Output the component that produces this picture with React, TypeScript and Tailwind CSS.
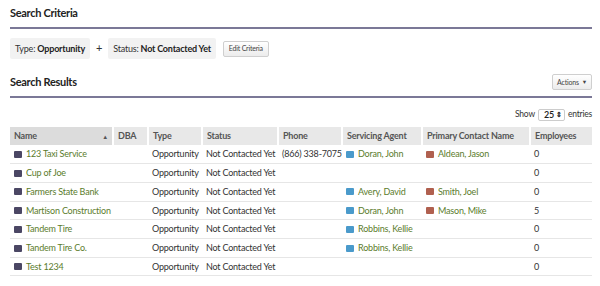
// Search page: criteria chips + results table

const rows = [
  { name: '123 Taxi Service', phone: '(866) 338-7075', agent: 'Doran, John', contact: 'Aldean, Jason', emp: '0' },
  { name: 'Cup of Joe', phone: '', agent: '', contact: '', emp: '0' },
  { name: 'Farmers State Bank', phone: '', agent: 'Avery, David', contact: 'Smith, Joel', emp: '0' },
  { name: 'Martison Construction', phone: '', agent: 'Doran, John', contact: 'Mason, Mike', emp: '5' },
  { name: 'Tandem Tire', phone: '', agent: 'Robbins, Kellie', contact: '', emp: '0' },
  { name: 'Tandem Tire Co.', phone: '', agent: 'Robbins, Kellie', contact: '', emp: '0' },
  { name: 'Test 1234', phone: '', agent: '', contact: '', emp: '0' },
]

const cols = [
  { label: 'Name', w: 103 },
  { label: 'DBA', w: 35 },
  { label: 'Type', w: 54 },
  { label: 'Status', w: 76 },
  { label: 'Phone', w: 64 },
  { label: 'Servicing Agent', w: 80 },
  { label: 'Primary Contact Name', w: 108 },
  { label: 'Employees', w: 62 },
]

function Swatch({ color }: { color: string }) {
  return <span className={`inline-block w-[8px] h-[7px] rounded-[1px] mr-[4px] align-[-0.5px] ${color}`} />
}

function Link({ text, color }: { text: string; color: string }) {
  if (!text) return null
  return (
    <span className="whitespace-nowrap">
      <Swatch color={color} />
      <span className="text-[#5b7c2c]">{text}</span>
    </span>
  )
}

function SectionTitle({ children, right }: { children: React.ReactNode; right?: React.ReactNode }) {
  return (
    <div>
      <div className="flex items-center justify-between h-[22px]">
        <h2 className="text-[11px] font-bold text-[#222] tracking-[-0.3px]">{children}</h2>
        {right}
      </div>
      <div className="h-[2px] bg-[#7b7897] mt-[3px]" />
    </div>
  )
}

export default function App() {
  return (
    <div
      className="w-[600px] h-[286px] bg-white pl-[10px] pr-[8px] pt-[2px] text-[9px] tracking-[-0.2px] text-[#333] overflow-hidden"
      style={{ fontFamily: 'Lato, "Open Sans", sans-serif' }}
    >
      <SectionTitle>Search Criteria</SectionTitle>

      <div className="flex items-center mt-[9px] h-[21px]">
        <div className="h-full flex items-center px-[5px] bg-[#f2f2f2] rounded-[2px]">
          Type:&nbsp;<b className="text-[#222]">Opportunity</b>
        </div>
        <span className="mx-[6px] text-[11px] text-[#333]">+</span>
        <div className="h-full flex items-center px-[5px] bg-[#f2f2f2] rounded-[2px]">
          Status:&nbsp;<b className="text-[#222]">Not Contacted Yet</b>
        </div>
        <button className="ml-[7px] h-[16px] px-[5px] text-[7px] text-[#444] border border-[#cfcfcf] rounded-[2px] bg-gradient-to-b from-white to-[#ececec]">
          Edit Criteria
        </button>
      </div>

      <div className="mt-[12px]">
        <SectionTitle
          right={
            <button className="h-[16px] px-[4px] text-[7px] text-[#444] border border-[#cfcfcf] rounded-[2px] bg-gradient-to-b from-white to-[#ececec] flex items-center gap-[3px]">
              Actions <span className="text-[5.5px]">▼</span>
            </button>
          }
        >
          Search Results
        </SectionTitle>
      </div>

      <div className="flex items-center justify-end mt-[10px] h-[13px] text-[8.5px]">
        Show
        <span className="mx-[3px] h-[12px] w-[27px] border border-[#ccc] rounded-[2px] flex items-center justify-between pl-[5px] pr-[2px] text-[9px] font-semibold text-[#222]">
          25 <span className="text-[7px] leading-none">⇕</span>
        </span>
        entries
      </div>

      <table className="mt-[6px] table-fixed border-collapse w-[582px]">
        <colgroup>
          {cols.map((c) => (
            <col key={c.label} style={{ width: c.w }} />
          ))}
        </colgroup>
        <thead>
          <tr className="h-[18px]">
            {cols.map((c, i) => (
              <th
                key={c.label}
                className={`text-left font-bold text-[#555] px-[4px] border-r-2 border-white last:border-r-0 whitespace-nowrap ${i === 0 ? 'bg-[#dcdcdc]' : 'bg-[#e8e8e8]'}`}
              >
                {i === 0 ? (
                  <span className="flex items-center justify-between">
                    Name <span className="text-[6px] text-[#555]">▲</span>
                  </span>
                ) : (
                  c.label
                )}
              </th>
            ))}
          </tr>
        </thead>
        <tbody>
          {rows.map((r) => (
            <tr key={r.name} className="h-[18.7px] border-b border-[#e6e6e6]">
              <td className="px-[4px] whitespace-nowrap">
                <Link text={r.name} color="bg-[#4b4764]" />
              </td>
              <td className="px-[4px]" />
              <td className="px-[4px]">Opportunity</td>
              <td className="px-[4px] whitespace-nowrap">Not Contacted Yet</td>
              <td className="px-[4px] whitespace-nowrap">{r.phone}</td>
              <td className="px-[4px]">
                <Link text={r.agent} color="bg-[#4a9acb]" />
              </td>
              <td className="px-[4px]">
                <Link text={r.contact} color="bg-[#b0604f]" />
              </td>
              <td className="px-[4px]">{r.emp}</td>
            </tr>
          ))}
        </tbody>
      </table>
    </div>
  )
}
